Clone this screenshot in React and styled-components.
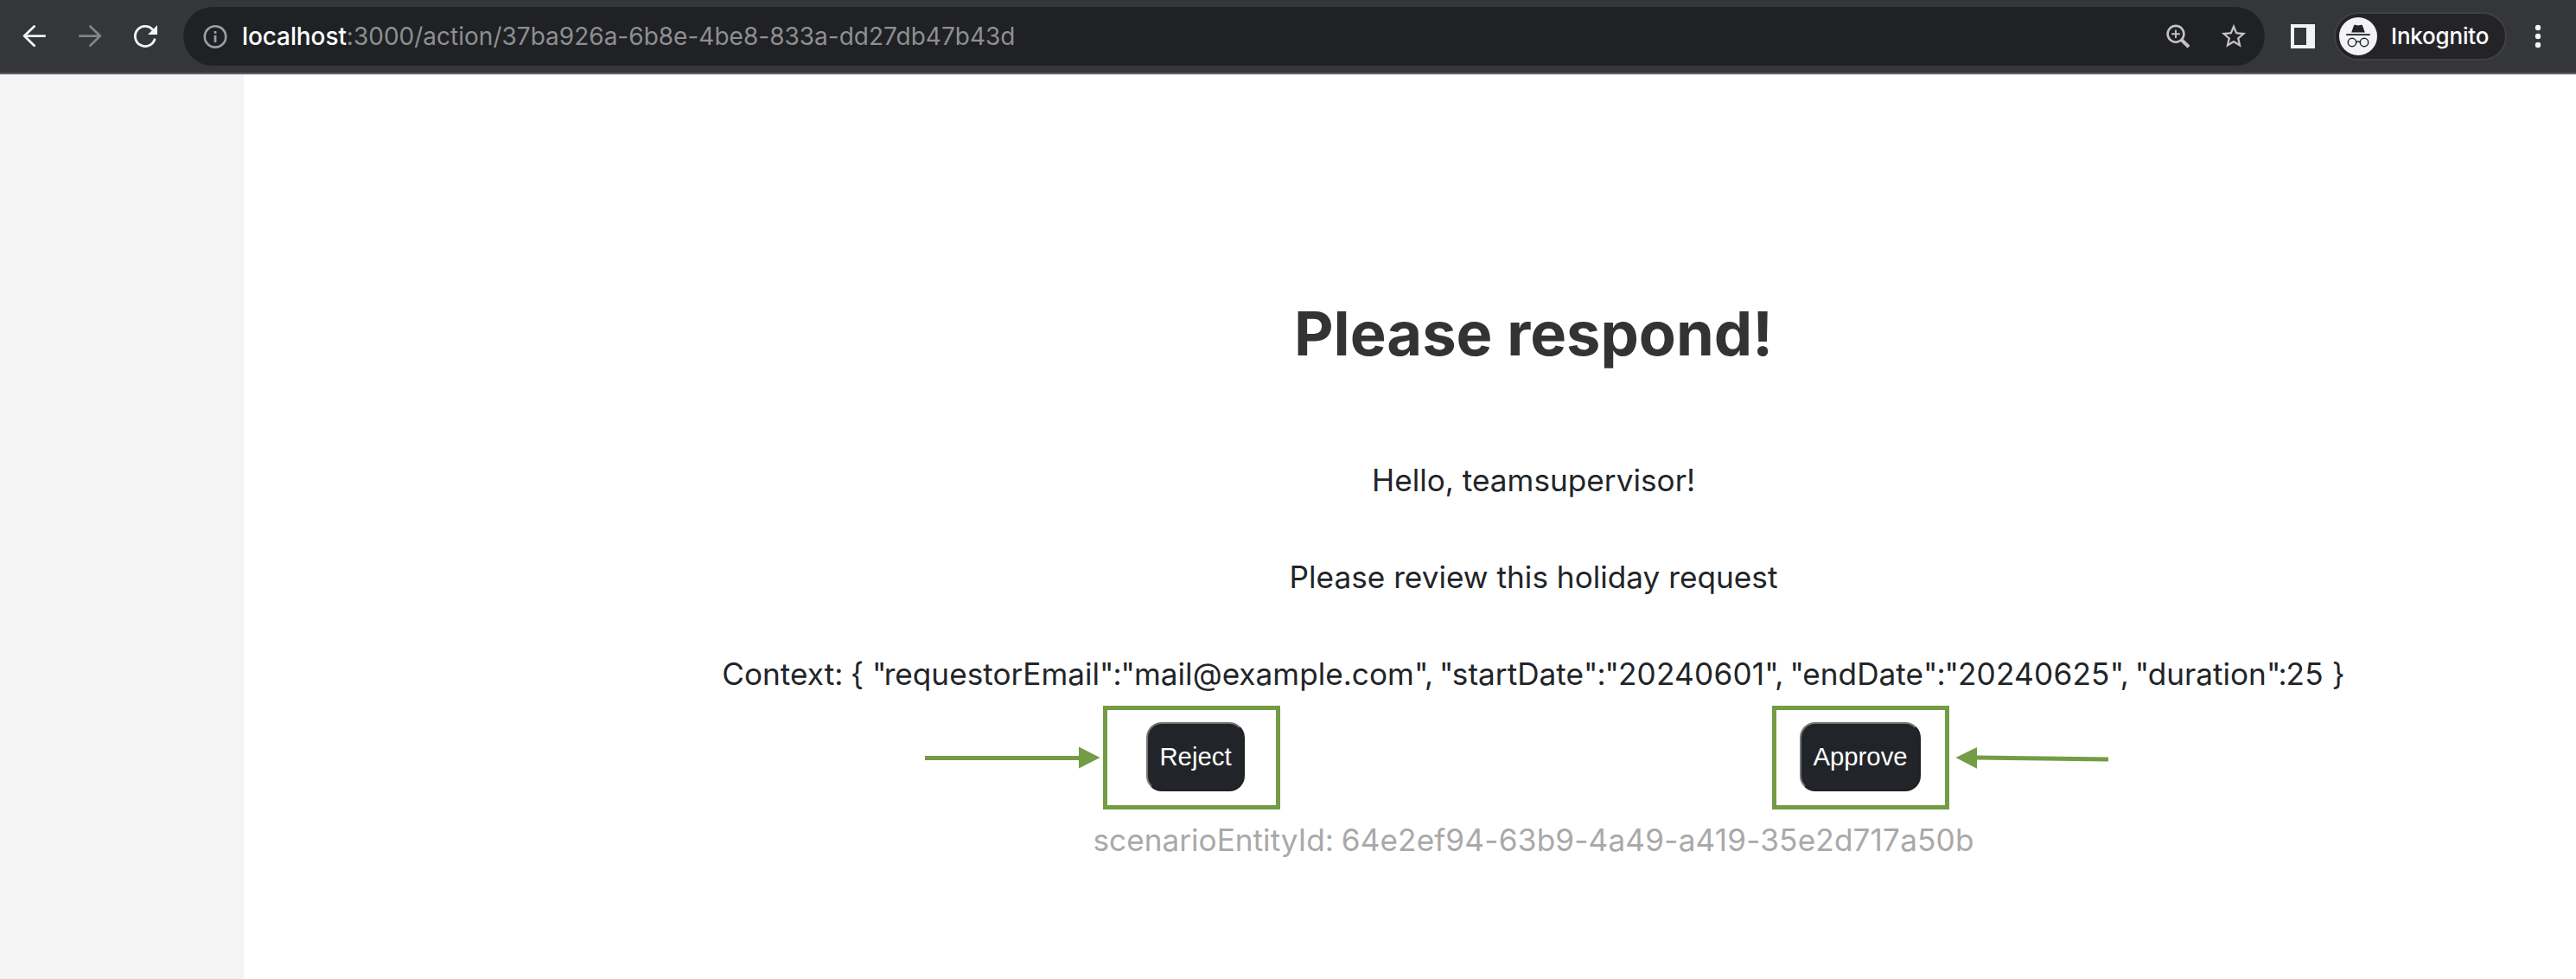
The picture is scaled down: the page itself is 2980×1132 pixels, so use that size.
import React from 'react';
import styled, { createGlobalStyle } from 'styled-components';

const GlobalStyle = createGlobalStyle`
  * { box-sizing: border-box; }
  body { margin: 0; background: #fff; font-family: Inter, "Liberation Sans", sans-serif; }
`;

const Window = styled.div`
  display: flex;
  flex-direction: column;
  width: 2980px;
  height: 1132px;
  overflow: hidden;
`;

const Toolbar = styled.header`
  display: flex;
  align-items: center;
  flex: none;
  height: 86px;
  padding-left: 20px;
  background: #35363a;
  border-bottom: 2px solid #5f6064;
`;

const Navigation = styled.nav`
  display: flex;
  align-items: center;
  gap: 24px;
  width: 192px;
  svg { display: block; flex: none; }
`;

const AddressBar = styled.div`
  display: flex;
  align-items: center;
  width: 2408px;
  height: 68px;
  padding: 0 19px 0 21px;
  border-radius: 34px;
  background: #202124;
  svg { display: block; flex: none; }
`;

const Url = styled.span`
  flex: 1;
  margin-left: 15px;
  font-size: 28px;
  line-height: 34px;
  letter-spacing: 0.01px;
  white-space: nowrap;
  color: #8e8f91;
`;

const Host = styled.span`
  font-weight: 450;
  letter-spacing: -0.1px;
  color: #fff;
`;

const AddressActions = styled.div`
  display: flex;
  align-items: center;
  gap: 29px;
`;

const PanelIcon = styled.svg`
  display: block;
  flex: none;
  margin-left: 30px;
`;

const ProfileChip = styled.div`
  display: flex;
  align-items: center;
  width: 200px;
  height: 56px;
  margin-left: 22px;
  padding-left: 4px;
  border: 2px solid #404145;
  border-radius: 28px;
  background: #242428;
  svg { display: block; flex: none; }
`;

const ProfileName = styled.span`
  margin-left: 16px;
  font-size: 26px;
  font-weight: 500;
  line-height: 32px;
  letter-spacing: -0.2px;
  color: #fff;
`;

const MenuIcon = styled.svg`
  display: block;
  flex: none;
  margin-left: 24px;
`;

const Page = styled.div`
  display: flex;
  flex: 1;
`;

const Sidebar = styled.aside`
  flex: none;
  width: 282px;
  background: #f5f5f5;
`;

const Content = styled.main`
  display: flex;
  flex-direction: column;
  align-items: center;
  flex: 1;
  padding: 257px 0 0 286px;
  color: #212529;
`;

const Title = styled.h1`
  margin: 0 0 99px;
  font-size: 70.4px;
  font-weight: 700;
  line-height: 86px;
  color: #333;
`;

const Line = styled.p`
  margin: 0 0 58px;
  font-size: 35.2px;
  line-height: 54px;
  white-space: nowrap;
`;

const ContextLine = styled(Line)`
  margin-bottom: 29px;
`;

const Glyphs = styled.span`
  letter-spacing: ${({ $spacing }) => $spacing}px;
`;

const Actions = styled.div`
  display: flex;
  justify-content: space-around;
  width: 1538px;
  margin-bottom: 29px;
`;

const ActionSlot = styled.div`
  position: relative;
  display: flex;
`;

const ActionButton = styled.button`
  width: ${({ $width }) => $width}px;
  height: 80px;
  padding: 0;
  border: 2px solid;
  border-color: #767676 #212121 #212121 #767676;
  border-radius: 18px;
  background: #212529;
  color: #fff;
  font-family: "Liberation Sans", Arial, sans-serif;
  font-size: 29.33px;
  line-height: 34px;
`;

const Highlight = styled.div`
  position: absolute;
  top: -19px;
  left: ${({ $left }) => $left}px;
  width: 205px;
  height: 120px;
  border: 5px solid #739c44;
`;

const Arrow = styled.svg`
  position: absolute;
  top: 25px;
  left: ${({ $left }) => $left}px;
  fill: #739c44;
`;

const EntityId = styled(Line)`
  margin: 0;
  color: #a9a9a9;
`;

const context =
  'Context: { "requestorEmail":"mail@example.com", "startDate":"20240601", "endDate":"20240625", "duration":25 }';

const entity = 'scenarioEntityId: 64e2ef94-63b9-4a49-a419-35e2d717a50b';

function spacingOf(part) {
  if (part === '":"') return -1;
  if (part === '", "') return -1.5;
  if (part === '"') return -2.7;
  if (part === ':') return -1.2;
  return 0.2;
}

/* Tightens quotes and separators, loosens runs of digits. */
function DataText({ text }) {
  return text
    .split(/(":"|", "|[":]|[\d-]+)/)
    .map((part, index) =>
      index % 2 ? <Glyphs key={index} $spacing={spacingOf(part)}>{part}</Glyphs> : part
    );
}

export default function App() {
  return (
    <Window>
      <GlobalStyle />
      <Toolbar>
        <Navigation>
          <svg width="40" height="40" viewBox="0 0 40 40" fill="none" stroke="#f1f3f4" strokeWidth="2.8" strokeLinecap="round" strokeLinejoin="round">
            <path d="M31.7 19.6H8M19.6 8.4L8.2 19.6L19.6 30.8" />
          </svg>
          <svg width="40" height="40" viewBox="0 0 40 40" fill="none" stroke="#828386" strokeWidth="2.8" strokeLinecap="round" strokeLinejoin="round">
            <path d="M8.3 19.6H32M20.4 8.4L31.8 19.6L20.4 30.8" />
          </svg>
          <svg width="40" height="40" viewBox="0 0 40 40" fill="#f1f3f4">
            <path d="M30.9 23.8A11.6 11.6 0 1 1 28.6 12.2" fill="none" stroke="#f1f3f4" strokeWidth="2.8" strokeLinecap="round" />
            <path d="M34 7V18H23Z" />
          </svg>
        </Navigation>
        <AddressBar>
          <svg width="32" height="32" viewBox="0 0 32 32" fill="#9aa0a6">
            <circle cx="16" cy="16.4" r="12.2" fill="none" stroke="#9aa0a6" strokeWidth="2.6" />
            <rect x="14.6" y="10" width="2.8" height="2.8" />
            <rect x="14.6" y="14.8" width="2.8" height="8.2" />
          </svg>
          <Url><Host>localhost</Host>:3000/action/37ba926a-6b8e-4be8-833a-dd27db47b43d</Url>
          <AddressActions>
            <svg width="36" height="36" viewBox="0 0 36 36" fill="none" stroke="#c3c3c3">
              <circle cx="15" cy="15.3" r="9.4" strokeWidth="2.6" />
              <path d="M21.6 22L30 30.2" strokeWidth="4" />
              <path d="M10.2 15.3H19.8M15 10.5V20.1" strokeWidth="1.9" />
            </svg>
            <svg width="34" height="34" viewBox="0 0 24 24" fill="#c3c3c3">
              <path d="M22 9.24l-7.19-.62L12 2 9.19 8.63 2 9.24l5.46 4.73L5.82 21 12 17.27 18.18 21l-1.63-7.03L22 9.24zM12 15.4l-3.76 2.27 1-4.28-3.32-2.88 4.38-.38L12 6.1l1.71 4.04 4.38.38-3.32 2.88 1 4.28L12 15.4z" />
            </svg>
          </AddressActions>
        </AddressBar>
        <PanelIcon width="28" height="28" viewBox="0 0 28 28" fill="#f1f3f4">
          <path fillRule="evenodd" d="M0 0H28V28H0ZM4 4V24H18V4Z" />
        </PanelIcon>
        <ProfileChip>
          <svg width="44" height="44" viewBox="0 0 44 44">
            <circle cx="22" cy="22" r="22" fill="#f1f3f4" />
            <g fill="#242428">
              <path d="M14.2 17.4L17 9.6Q17.4 8.4 18.7 8.7L22 9.5L25.3 8.7Q26.6 8.4 27 9.6L29.8 17.4Z" />
              <rect x="8.2" y="19.2" width="27.6" height="1.8" />
            </g>
            <g fill="none" stroke="#242428" strokeWidth="1.5">
              <circle cx="15" cy="29" r="4.7" />
              <circle cx="29" cy="29" r="4.7" />
              <path d="M19.7 28.7Q22 27.5 24.3 28.7" />
            </g>
          </svg>
          <ProfileName>Inkognito</ProfileName>
        </ProfileChip>
        <MenuIcon width="24" height="28" viewBox="0 0 24 28" fill="#f1f3f4">
          <circle cx="12" cy="4" r="3.2" />
          <circle cx="12" cy="14" r="3.2" />
          <circle cx="12" cy="24" r="3.2" />
        </MenuIcon>
      </Toolbar>
      <Page>
        <Sidebar />
        <Content>
          <Title>Please respond!</Title>
          <Line>Hello, teamsupervisor!</Line>
          <Line>Please review this holiday request</Line>
          <ContextLine>
            <DataText text={context} />
          </ContextLine>
          <Actions>
            <ActionSlot>
              <ActionButton $width={114}>Reject</ActionButton>
              <Highlight $left={-50} />
              <Arrow $left={-256} width="204" height="32" viewBox="0 0 204 32">
                <path d="M0 14H178V3.5L202.5 16L178 28.5V19H0Z" />
              </Arrow>
            </ActionSlot>
            <ActionSlot>
              <ActionButton $width={140}>Approve</ActionButton>
              <Highlight $left={-32} />
              <Arrow $left={180} width="180" height="32" viewBox="0 0 180 32">
                <path d="M0.5 16L25 4V13.6L177 15.4V20.4L25 18.6V28.8Z" />
              </Arrow>
            </ActionSlot>
          </Actions>
          <EntityId>
            <DataText text={entity} />
          </EntityId>
        </Content>
      </Page>
    </Window>
  );
}
